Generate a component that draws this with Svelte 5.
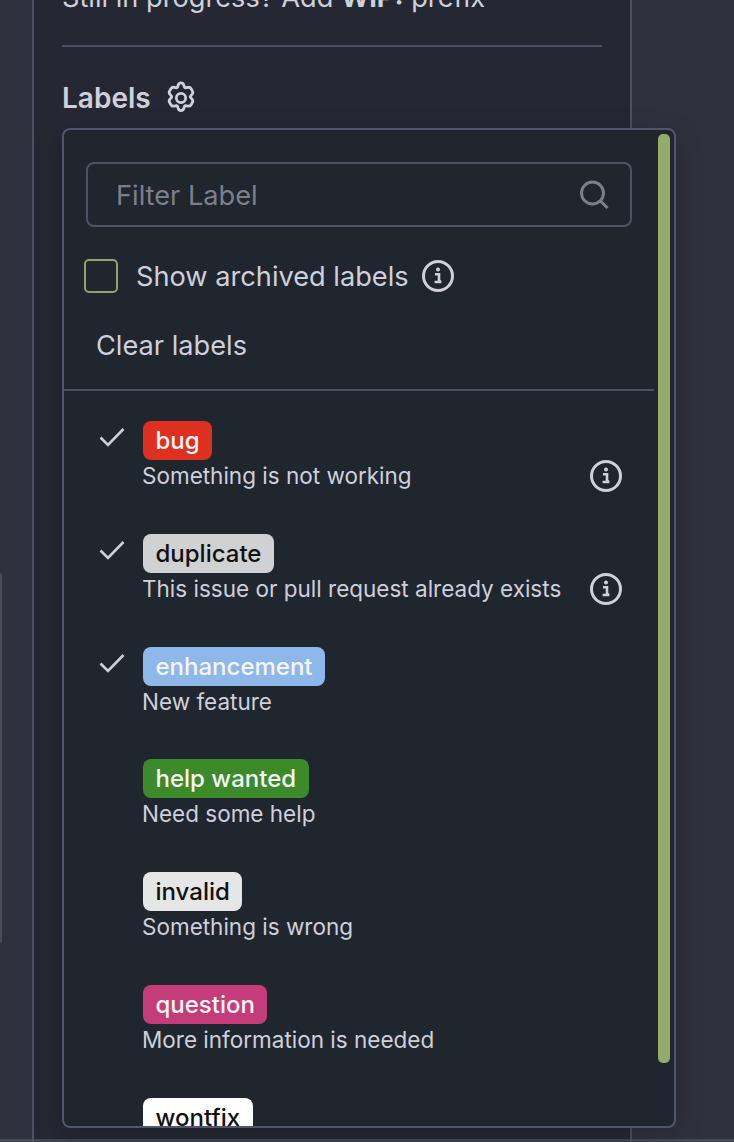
<script lang="ts">
  interface Label {
    name: string;
    description: string;
    color: string;
    dark?: boolean;
    checked?: boolean;
    archivedInfo?: boolean;
  }

  const labels: Label[] = [
    { name: 'bug', description: 'Something is not working', color: '#de3021', checked: true, archivedInfo: true },
    { name: 'duplicate', description: 'This issue or pull request already exists', color: '#cfd1d3', dark: true, checked: true, archivedInfo: true },
    { name: 'enhancement', description: 'New feature', color: '#8fb8ea', checked: true },
    { name: 'help wanted', description: 'Need some help', color: '#3c8a29' },
    { name: 'invalid', description: 'Something is wrong', color: '#e6e6e6', dark: true },
    { name: 'question', description: 'More information is needed', color: '#c43d7a' },
    { name: 'wontfix', description: '', color: '#ffffff', dark: true }
  ];
</script>

{#snippet infoIcon()}
  <svg class="info" viewBox="0 0 32 32" width="32" height="32" fill="none" aria-hidden="true">
    <circle cx="16" cy="16" r="14.5" stroke="currentColor" stroke-width="3" />
    <circle cx="16" cy="9.6" r="2" fill="currentColor" />
    <path d="M13 14.2h4v7.4h2.2M12.6 22h6.8" stroke="currentColor" stroke-width="2.6" />
  </svg>
{/snippet}

<div class="page">
  <div class="left-edge"></div>
  <aside class="sidebar">
    <p class="wip">Still in progress? Add <strong>WIP:</strong> prefix</p>
    <hr class="divider" />

    <section class="labels">
      <h3 class="labels-title">
        Labels
        <svg viewBox="0 0 32 32" width="34" height="34" fill="none" stroke="currentColor" stroke-width="2.6" stroke-linejoin="round" aria-hidden="true">
          <path d="M16 1.800c1.400 0 2.300 1 2.700 2.200l.5 1.700c.2.500.7.800 1.200.7l1.800-.4c1.300-.3 2.600.1 3.300 1.300l1.200 2c.7 1.200.4 2.500-.5 3.500l-1.200 1.300c-.4.400-.4 1 0 1.400l1.200 1.300c.9 1 1.200 2.300.5 3.500l-1.200 2c-.7 1.200-2 1.600-3.300 1.300l-1.800-.4c-.5-.1-1 .2-1.200.7l-.5 1.700c-.4 1.200-1.300 2.200-2.700 2.200s-2.300-1-2.700-2.200l-.5-1.700c-.2-.5-.7-.8-1.200-.7l-1.800.4c-1.300.3-2.600-.1-3.300-1.300l-1.200-2c-.7-1.200-.4-2.500.5-3.500l1.200-1.300c.4-.4.4-1 0-1.400l-1.200-1.300c-.9-1-1.200-2.300-.5-3.500l1.200-2c.7-1.200 2-1.600 3.300-1.300l1.800.4c.5.100 1-.2 1.200-.7l.5-1.700c.4-1.200 1.300-2.200 2.700-2.200z" />
          <circle cx="16" cy="16" r="4.400" />
        </svg>
      </h3>

      <div class="popover">
        <div class="scroll">
          <div class="head">
            <div class="filter">
              <span class="placeholder">Filter Label</span>
              <svg viewBox="0 0 30 30" width="30" height="30" fill="none" stroke="currentColor" stroke-width="3" aria-hidden="true">
                <circle cx="13.500" cy="13" r="11" />
                <path d="M21.500 21l7 7" />
              </svg>
            </div>
            <div class="archived">
              <span class="checkbox"></span>
              <span>Show archived labels</span>
              {@render infoIcon()}
            </div>
            <div class="clear">Clear labels</div>
          </div>

          <ul class="list">
            {#each labels as label}
              <li class="row">
                <span class="check">
                  {#if label.checked}
                    <svg viewBox="0 0 26 20" width="26" height="20" fill="none" stroke="currentColor" stroke-width="2.600" aria-hidden="true">
                      <path d="M1.500 10.500l7.500 7.500L24.500 2" />
                    </svg>
                  {/if}
                </span>
                <div class="body">
                  <span class="badge" class:dark={label.dark} style="background: {label.color}">{label.name}</span>
                  <span class="desc">{label.description}</span>
                </div>
                {#if label.archivedInfo}
                  <span class="row-info">{@render infoIcon()}</span>
                {/if}
              </li>
            {/each}
          </ul>
        </div>
        <div class="thumb"></div>
      </div>
    </section>

    <div class="next-title">Time Tracker</div>
  </aside>
  <div class="bottom-line"></div>
</div>

<style>
  :global(body) {
    margin: 0;
    background: #2f313d;
  }

  .page {
    position: relative;
    width: 734px;
    height: 1142px;
    overflow: hidden;
    background: #2f313d;
    font-family: Inter, 'Liberation Sans', sans-serif;
    color: #ced0db;
  }

  .left-edge {
    position: absolute;
    left: 0;
    top: 573px;
    width: 2px;
    height: 370px;
    background: #4a4c5c;
    border-radius: 0 3px 3px 0;
  }

  .sidebar {
    box-sizing: border-box;
    width: 600px;
    height: 1180px;
    margin-left: 32px;
    margin-top: -20px;
    padding: 0 28px 0 28px;
    background: #252833;
    border-left: 2px solid #4c4f5f;
    border-right: 2px solid #4c4f5f;
  }

  .wip {
    margin: 0;
    height: 63px;
    padding-top: 2px;
    font-size: 27.2px;
    line-height: 32px;
    white-space: nowrap;
  }

  .divider {
    margin: 0;
    border: 0;
    height: 2px;
    background: #4c4f5f;
  }

  .labels {
    position: relative;
  }

  .labels-title {
    display: flex;
    align-items: center;
    gap: 13px;
    margin: 0;
    padding-top: 27px;
    height: 48px;
    font-size: 28px;
    font-weight: 600;
    color: #ced0db;
  }

  /* dropdown hangs past the sidebar's right edge */
  .popover {
    position: absolute;
    left: 0;
    top: 81px;
    box-sizing: border-box;
    width: 614px;
    height: 1000px;
    background: #20262e;
    border: 2px solid #53566a;
    border-radius: 8px;
    overflow: hidden;
    box-shadow: 0 8px 28px rgba(0, 0, 0, 0.2);
    z-index: 2;
  }

  .scroll {
    width: 590px;
  }

  .head {
    box-sizing: border-box;
    height: 261px;
    padding: 32px 22px 0 22px;
    border-bottom: 2px solid #4c4f5f;
  }

  .filter {
    box-sizing: border-box;
    display: flex;
    align-items: center;
    justify-content: space-between;
    width: 546px;
    height: 65px;
    padding: 0 21px 0 28px;
    border: 2px solid #4f5263;
    border-radius: 8px;
    color: #7d7f8b;
    font-size: 27.2px;
  }

  .placeholder {
    padding-top: 2px;
  }

  .archived {
    display: flex;
    align-items: center;
    margin: 32px 0 0 -2px;
    height: 34px;
    font-size: 27.2px;
  }

  .checkbox {
    box-sizing: border-box;
    width: 34px;
    height: 34px;
    margin-right: 18px;
    border: 2px solid #8ba56c;
    border-radius: 5px;
  }

  .archived .info {
    margin-left: 13px;
  }

  .clear {
    margin: 37px 0 0 10px;
    font-size: 27.2px;
    line-height: 32px;
  }

  .list {
    list-style: none;
    margin: 0;
    padding: 30px 0 0 0;
  }

  .row {
    position: relative;
    display: flex;
    height: 112.800px;
  }

  .check {
    box-sizing: border-box;
    width: 79px;
    padding: 6px 0 0 35px;
  }

  .check svg {
    display: block;
  }

  .body {
    display: flex;
    flex-direction: column;
    align-items: flex-start;
  }

  .badge {
    box-sizing: border-box;
    height: 39px;
    padding: 0 12.500px;
    border-radius: 8px;
    color: #f5f5f5;
    font-size: 24px;
    font-weight: 500;
    line-height: 40px;
    white-space: nowrap;
  }

  .badge.dark {
    color: #111;
  }

  .desc {
    margin-top: 1px;
    margin-left: -1px;
    font-size: 22.500px;
    line-height: 30px;
    white-space: nowrap;
  }

  .row-info {
    position: absolute;
    left: 526px;
    top: 39px;
  }

  .info {
    display: block;
    color: #ced0db;
  }

  .thumb {
    position: absolute;
    right: 4px;
    top: 4px;
    width: 12px;
    height: 929px;
    border-radius: 5px;
    background: #92ab6d;
  }

  .next-title {
    margin-top: 1025px;
    font-size: 26px;
    font-weight: 600;
  }

  .bottom-line {
    position: absolute;
    left: 0;
    right: 0;
    bottom: 0;
    height: 3px;
    background: rgba(90, 92, 110, 0.55);
  }
</style>
